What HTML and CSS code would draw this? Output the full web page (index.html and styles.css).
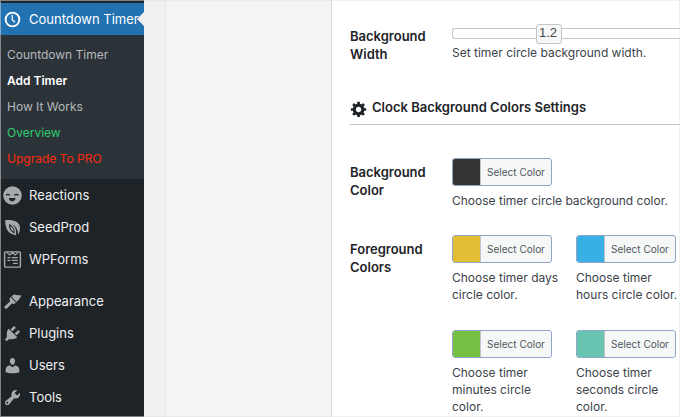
FILE: index.html
```html
<!DOCTYPE html>
<html lang="en">
<head>
<meta charset="utf-8">
<title>Add Timer</title>
<link rel="stylesheet" href="styles.css">
</head>
<body>
<div class="app">
  <nav class="sidebar" aria-label="Main menu">
    <a class="item current" href="#">
      <svg class="icon" viewBox="0 0 20 20"><circle cx="10" cy="10" r="7.2" fill="none" stroke="currentColor" stroke-width="2"/><path d="M9.7 5v5.3l3 2.600" fill="none" stroke="currentColor" stroke-width="1.300"/></svg>
      <span>Countdown Timer</span>
    </a>
    <div class="submenu">
      <a href="#">Countdown Timer</a>
      <a class="active" href="#">Add Timer</a>
      <a href="#">How It Works</a>
      <a class="overview" href="#">Overview</a>
      <a class="upgrade" href="#">Upgrade To PRO</a>
    </div>
    <a class="item" href="#">
      <svg class="icon" viewBox="0 0 20 20"><circle cx="10" cy="10" r="9.800" fill="currentColor"/><path d="M3.200 10q1.900-2.600 4 0M12 10q2.100-2.600 4.200 0" fill="none" stroke="#1d2327" stroke-width="1.300"/><path d="M6.200 12.700h7q-.4 3.500-3.500 3.500t-3.500-3.500z" fill="#1d2327"/></svg>
      <span>Reactions</span>
    </a>
    <a class="item" href="#">
      <svg class="icon" viewBox="0 0 20 20"><path d="M2.300 2.200C10 1.600 17.900 3 17.900 10.500c0 2.300-.5 4.600-1.900 6.900-.2-4.800-2.300-8.900-6.700-11.700 4 3.900 5.200 7.700 4.300 12.500C5.200 16.800 2.400 11.800 2.300 2.200z" fill="currentColor"/><path d="M6.400 6c-.4 5 1.700 8.400 5.900 10.300.5-4.400-1.900-7.800-5.900-10.300z" fill="#1d2327"/><path d="M7.700 8.500c.1 2.900 1.200 4.800 3.500 6.100.1-2.500-1.200-4.500-3.500-6.100z" fill="currentColor"/></svg>
      <span>SeedProd</span>
    </a>
    <a class="item" href="#">
      <svg class="icon" viewBox="0 0 20 20"><g fill="none" stroke="currentColor"><rect x="1.700" y="2" width="16.600" height="16" rx="1" stroke-width="1.500"/><path d="M4 2.500l3 2.700 3-2.400 3 2.400 3-2.700M4.700 8h3M9 8h6.500M4.700 11h3M9 11h6.500M10.500 14.200h5" stroke-width="1.300"/></g></svg>
      <span>WPForms</span>
    </a>
    <div class="separator"></div>
    <a class="item" href="#">
      <svg class="icon" viewBox="0 0 20 20"><path d="M8.800 4.600L11.600 2.500l2.600.6 5.200.7-2.200 3.500-3 3.200zM8 5.300l5.500 5.800-1.500 1.600-2.700-.6-5.100 5.200c-1.500 1.300-3.700-.7-2.400-2.300l5.600-5-.6-2.800z" fill="currentColor"/></svg>
      <span>Appearance</span>
    </a>
    <a class="item" href="#">
      <svg class="icon" viewBox="0 0 20 20"><path d="M13.110 4.360L9.870 7.600 8 5.730l3.240-3.240c.35-.34 1.050-.2 1.560.32.52.51.66 1.210.31 1.550zm-8 1.770l.91-1.120 9.010 9.010-1.190.84c-.71.71-2.630 1.160-3.820 1.160H6.140L4.900 17.260c-.59.59-1.540.59-2.120 0-.59-.58-.59-1.530 0-2.120l1.240-1.240v-3.880c0-1.130.4-3.190 1.090-3.890zm7.260 3.970l3.240-3.240c.34-.35 1.040-.21 1.550.31.52.51.66 1.210.31 1.550l-3.240 3.250z" fill="currentColor"/></svg>
      <span>Plugins</span>
    </a>
    <a class="item" href="#">
      <svg class="icon" viewBox="0 0 20 20"><path d="M10 9.250c-2.270 0-2.730-3.440-2.730-3.440C7 4.020 7.820 2 9.970 2c2.160 0 2.980 2.020 2.710 3.810 0 0-.41 3.440-2.680 3.440zm0 2.570L12.720 10c2.390 0 4.520 2.330 4.520 4.530v2.490s-3.650 1.130-7.240 1.130c-3.650 0-7.240-1.130-7.240-1.130v-2.490c0-2.250 1.940-4.480 4.470-4.480z" fill="currentColor"/></svg>
      <span>Users</span>
    </a>
    <a class="item" href="#">
      <svg class="icon" viewBox="0 0 20 20"><path d="M16.680 9.770c-1.340 1.340-3.300 1.670-4.950.99l-5.410 6.520c-.99.99-2.590.99-3.580 0s-.99-2.590 0-3.570l6.520-5.420c-.68-1.650-.35-3.610.99-4.950 1.280-1.280 3.120-1.620 4.720-1.060l-2.890 2.890 2.820 2.820 2.860-2.870c.53 1.580.18 3.390-1.080 4.650zM3.810 16.210c.4.390 1.040.39 1.430 0 .4-.4.4-1.040 0-1.430-.39-.4-1.030-.4-1.430 0-.39.390-.39 1.030 0 1.430z" fill="currentColor"/></svg>
      <span>Tools</span>
    </a>
  </nav>
  <div class="gutter"></div>
  <div class="preview"></div>
  <main class="settings">
    <section class="row width-row">
      <label class="title" for="width">Background Width</label>
      <div class="field">
        <div class="slider">
          <input id="width" type="range" min="0" max="2.9" step="0.1" value="1.2">
          <output for="width">1.2</output>
        </div>
        <p>Set timer circle background width.</p>
      </div>
    </section>
    <h2>
      <svg class="gear" viewBox="0 0 20 20"><path d="M18 12h-2.180c-.17.7-.44 1.350-.81 1.930l1.540 1.540-2.100 2.100-1.540-1.540c-.58.360-1.230.630-1.910.790V19H8v-2.180c-.68-.16-1.330-.43-1.910-.79l-1.540 1.540-2.120-2.120 1.540-1.540c-.36-.58-.63-1.230-.79-1.910H1V9.030h2.170c.16-.7.440-1.350.8-1.940L2.430 5.550l2.100-2.100 1.540 1.540c.58-.37 1.240-.64 1.930-.81V2h3v2.180c.68.160 1.330.430 1.910.790l1.540-1.540 2.120 2.120-1.540 1.540c.36.590.64 1.240.8 1.940H18V12zm-8.500 1.500c1.660 0 3-1.340 3-3s-1.340-3-3-3-3 1.340-3 3 1.340 3 3 3z" fill="currentColor"/></svg>
      <span>Clock Background Colors Settings</span>
    </h2>
    <section class="row color-row">
      <h3 class="title">Background Color</h3>
      <div class="field">
        <button class="picker" type="button"><span class="swatch dark"></span><span class="pick">Select Color</span></button>
        <p>Choose timer circle background color.</p>
      </div>
    </section>
    <section class="row color-row">
      <h3 class="title">Foreground Colors</h3>
      <div class="field colors">
        <div>
          <button class="picker" type="button"><span class="swatch yellow"></span><span class="pick">Select Color</span></button>
          <p>Choose timer days circle color.</p>
        </div>
        <div>
          <button class="picker" type="button"><span class="swatch blue"></span><span class="pick">Select Color</span></button>
          <p>Choose timer hours circle color.</p>
        </div>
        <div>
          <button class="picker" type="button"><span class="swatch green"></span><span class="pick">Select Color</span></button>
          <p>Choose timer minutes circle color.</p>
        </div>
        <div>
          <button class="picker" type="button"><span class="swatch teal"></span><span class="pick">Select Color</span></button>
          <p>Choose timer seconds circle color.</p>
        </div>
      </div>
    </section>
  </main>
</div>
</body>
</html>
```
FILE: styles.css
```css
* { box-sizing: border-box; }
body {
  margin: 0;
  font-family: Inter, "Liberation Sans", sans-serif;
  font-size: 12px;
  line-height: 17px;
  color: #3c434a;
  background: #fff;
}
.app {
  position: relative;
  display: grid;
  grid-template-columns: 144px 22px 165px minmax(0, 1fr);
  min-height: 100vh;
}
/* thin frame over the whole window */
.app::after {
  content: "";
  position: absolute;
  inset: 0;
  border: 1px solid rgba(225, 225, 225, 0.5);
  pointer-events: none;
}
.sidebar { padding-top: 3px; background: #1d2327; }
.sidebar a { text-decoration: none; }
.item {
  display: flex;
  align-items: center;
  gap: 7px;
  height: 32px;
  padding-left: 3px;
  font-size: 13px;
  white-space: nowrap;
  color: #f0f0f1;
}
.icon { width: 19px; height: 19px; color: #a7aaad; flex: none; }
.item.current { position: relative; background: #2271b1; color: #fff; }
.current .icon { color: #fff; }
.current::after {
  content: "";
  position: absolute;
  right: 0;
  top: 9px;
  border: 7px solid transparent;
  border-left-width: 0;
  border-right: 7px solid #f0f0f1;
}
.submenu { padding: 7px 0; background: #2c3338; }
.submenu a { display: block; padding-left: 7px; line-height: 26px; color: #b5b8bc; }
.submenu .active { color: #fff; font-weight: 600; }
.submenu .overview { color: #2ecc71; }
.submenu .upgrade { color: #fc2a0d; }
.separator { height: 10px; }
.gutter { background: #f0f0f0; border-right: 1px solid #e8e8e9; }
.preview { background: #f4f4f4; }
.settings { padding-left: 18px; border-left: 1px solid #dcdcde; min-width: 0; }
.row { display: grid; grid-template-columns: 102px minmax(0, 1fr); }
.width-row { padding-top: 27px; }
.title { margin: 0; font-size: 13px; font-weight: 600; line-height: 18px; color: #1d2327; }
.row p { margin: 0; }
.slider { position: relative; height: 17px; padding-top: 1px; }
.slider input {
  appearance: none;
  display: block;
  width: 100%;
  height: 11px;
  margin: 0;
  border: 1px solid #c5c5c5;
  border-right: 0;
  border-radius: 3px 0 0 3px;
  background: #fff;
}
.slider input::-webkit-slider-thumb {
  appearance: none;
  width: 26px;
  height: 20px;
  border: 1px solid #c5c5c5;
  border-radius: 3px;
  background: #f6f7f7;
}
.slider output {
  position: absolute;
  left: 83px;
  top: -4px;
  width: 26px;
  line-height: 20px;
  text-align: center;
  font-family: "Liberation Sans", sans-serif;
  font-size: 13px;
  color: #454545;
  pointer-events: none;
}
h2 {
  display: flex;
  align-items: center;
  gap: 4px;
  height: 34px;
  margin: 28px 0 33px;
  border-bottom: 1px solid #c3c4c7;
  font-size: 13px;
  font-weight: 600;
  color: #1d2327;
}
.gear { width: 18px; height: 18px; margin-top: 3px; }
.color-row { margin-bottom: 26px; }
.color-row:last-child { margin-bottom: 0; }
.color-row .title { padding-top: 5px; }
.picker {
  display: flex;
  width: 100px;
  height: 28px;
  margin: 0 0 6px;
  padding: 0;
  overflow: hidden;
  border: 1px solid #8fa6c6;
  border-radius: 3px;
  background: #f6f7f7;
  font-family: inherit;
  font-size: 10px;
  color: #50575e;
}
.swatch { width: 28px; height: 100%; border-right: 1px solid #c3c4c7; flex: none; }
.pick { flex: 1; text-align: center; line-height: 26px; white-space: nowrap; }
.dark { background: #333; }
.yellow { background: #e2be35; }
.blue { background: #39b0e5; }
.green { background: #77c043; }
.teal { background: #69c5b1; }
.colors { display: grid; grid-template-columns: 108px minmax(0, 104px); column-gap: 16px; row-gap: 27px; }
```
